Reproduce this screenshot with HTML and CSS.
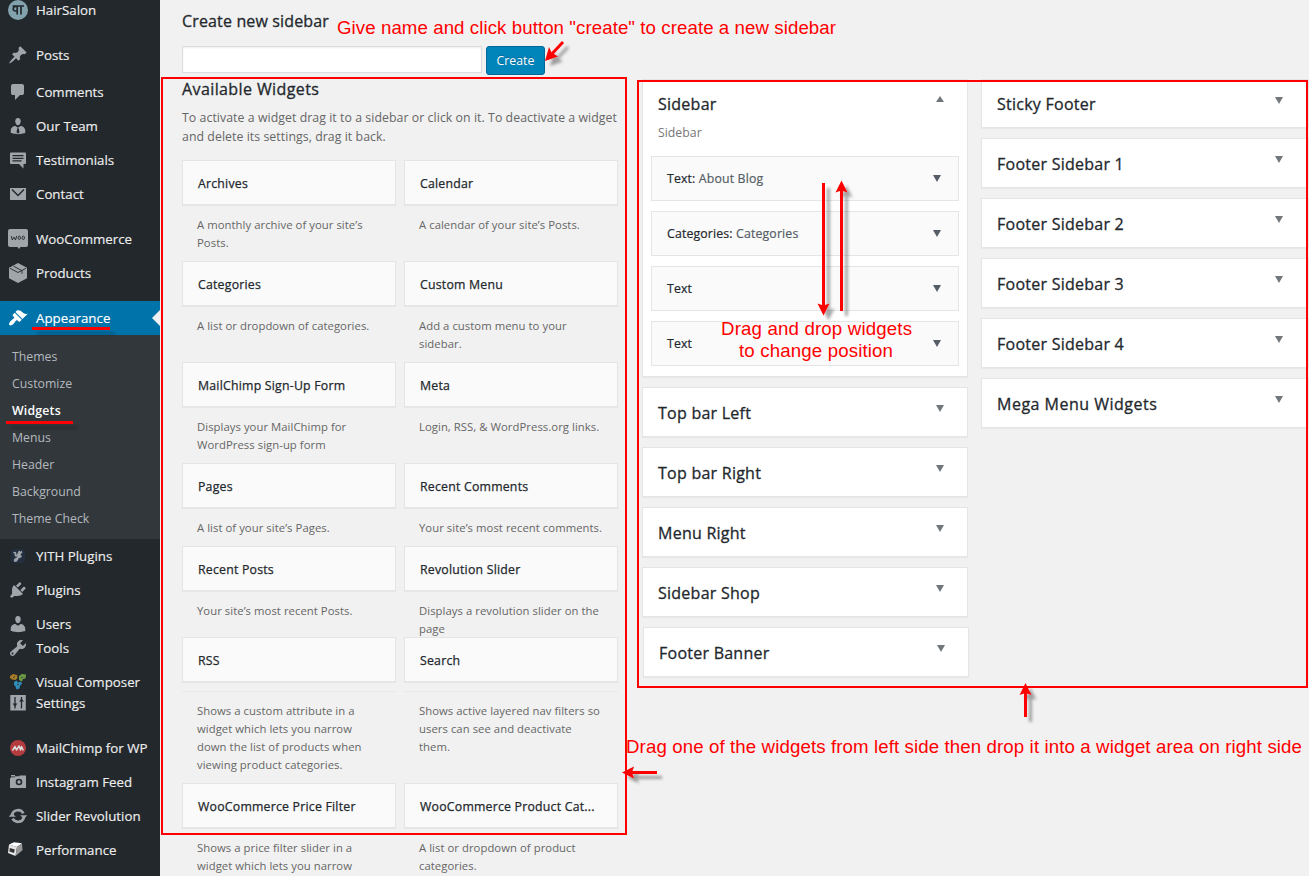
FILE: index.html
```html
<!DOCTYPE html>
<html lang="en">
<head>
<meta charset="utf-8">
<title>Widgets</title>
<link rel="stylesheet" href="styles.css">
</head>
<body>
<div class="admin">
  <nav class="menu">
    <a class="item"><svg class="icon" viewBox="0 0 20 20"><circle cx="10" cy="10" r="10" fill="#82a3ad"/><path d="M4.500 6H16M9.200 6v8.500M13 6v8.500M9 6.500c-4.500-.5-5 4.500-1.500 4.500H9" fill="none" stroke="#23282d" stroke-width="1.700"/></svg>HairSalon</a>
    <a class="item gap"><svg class="icon" viewBox="0 0 20 20"><path d="M10.440 3.020l1.820-1.820 6.360 6.350-1.830 1.820c-1.050-.68-2.480-.57-3.410.36l-.75.750c-.92.930-1.040 2.350-.35 3.410l-1.830 1.820-2.410-2.410-2.800 2.790c-.42.420-3.380 2.710-3.800 2.290s1.860-3.390 2.280-3.810l2.790-2.790L4.100 9.360l1.830-1.820c1.050.69 2.480.57 3.400-.36l.75-.75c.93-.92 1.050-2.350.36-3.410z"/></svg>Posts</a>
    <a class="item nudge"><svg class="icon" viewBox="0 0 20 20"><path d="M5 2h9q.82 0 1.410.590T16 4v7q0 .820-.590 1.410T14 13h-2l-5 5v-5H5q-.82 0-1.410-.590T3 11V4q0-.820.590-1.410T5 2z"/></svg>Comments</a>
    <a class="item"><svg class="icon" viewBox="0 0 20 20"><path d="M10 9.250c-2.270 0-2.730-3.440-2.730-3.440C7 4.020 7.820 2 9.970 2c2.160 0 2.980 2.020 2.710 3.810 0 0-.41 3.440-2.680 3.440zm0 2.570L12.720 10c2.390 0 4.520 2.330 4.520 4.530v2.490s-3.650 1.130-7.240 1.130c-3.650 0-7.240-1.130-7.240-1.130v-2.490c0-2.250 1.940-4.480 4.470-4.480z"/><path d="M9.300 12.200h1.400l.8 4-1.500 1.600-1.500-1.600z" fill="#23282d"/></svg>Our Team</a>
    <a class="item"><svg class="icon" viewBox="0 0 20 20"><path d="M3 2.500h14a1 1 0 0 1 1 1V13a1 1 0 0 1-1 1h-1.500v4.500L11 14H3a1 1 0 0 1-1-1V3.500a1 1 0 0 1 1-1z"/><path d="M4.500 5.700h11M4.500 8.300h11M4.500 10.900h9" stroke="#23282d" stroke-width="1.200"/></svg>Testimonials</a>
    <a class="item"><svg class="icon" viewBox="0 0 20 20"><path d="M2 4h16v12H2z"/><path d="M4 5.500l6 6 6-6" fill="none" stroke="#23282d" stroke-width="1.500"/></svg>Contact</a>
    <a class="item gap"><svg class="icon" viewBox="0 0 20 20"><path d="M2 0h16a2 2 0 0 1 2 2v14a2 2 0 0 1-2 2h-5.500L11 20l-1.500-2H2a2 2 0 0 1-2-2V2a2 2 0 0 1 2-2z"/><path d="M3.300 7l1 4 1.700-3 1.500 3 1.200-4" fill="none" stroke="#23282d" stroke-width=".9"/><ellipse cx="11.300" cy="8.800" rx="1.200" ry="1.700" fill="none" stroke="#23282d" stroke-width=".9"/><ellipse cx="15.300" cy="8.800" rx="1.200" ry="1.700" fill="none" stroke="#23282d" stroke-width=".9"/></svg>WooCommerce</a>
    <a class="item"><svg class="icon" viewBox="0 0 20 20"><path d="M10 0l9 4.700v10.600L10 20l-9-4.700V4.700z"/><path d="M2 5.300l8 4.200 8-4.200M5.500 3.200l8.500 4.500v3" fill="none" stroke="#23282d" stroke-width=".9"/></svg>Products</a>
    <a class="item gap current"><svg class="icon" viewBox="0 0 20 20"><path d="M14.480 11.060L7.410 3.990l1.500-1.500c.5-.56 2.300-.47 3.510.320 1.210.8 1.430 1.280 2.910 2.100 1.180.640 2.450 1.260 4.450.850zm-.71.710L6.700 4.700 4.930 6.470c-.39.390-.39 1.020 0 1.410l1.060 1.060c.39.390.39 1.030 0 1.420-.6.600-1.430 1.110-2.210 1.690-.35.260-.7.530-1.010.840C1.430 14.230.400 16.080 1.400 17.070c.99 1 2.840-.03 4.180-1.360.31-.31.580-.66.850-1.020.57-.78 1.080-1.610 1.690-2.210.39-.39 1.020-.39 1.410 0l1.060 1.060c.39.390 1.020.390 1.410 0z"/></svg>Appearance</a>
    <div class="submenu">
      <a>Themes</a><a>Customize</a><a class="active">Widgets</a><a>Menus</a><a>Header</a><a>Background</a><a>Theme Check</a>
    </div>
    <a class="item"><svg class="icon" viewBox="0 0 20 20"><rect x="3" y="3" width="14" height="14" rx="3" fill="#232f3f"/><path d="M5.500 7c1.500-1 2.500-.5 2 1.500s1.500 2 2.500 0l1.500-3.500c-.5 4-1.500 9-3.500 10-1.500.5-2-1-.5-2 2-1 4-1.500 6-3M14 5.500c-1.500 1-2.500 2.500-2.500 4.500" fill="none" stroke="#a0a5aa" stroke-width="1.700"/></svg>YITH Plugins</a>
    <a class="item"><svg class="icon" viewBox="0 0 20 20"><path d="M13.110 4.360L9.870 7.600 8 5.730l3.240-3.240c.35-.34 1.050-.2 1.560.320.520.510.660 1.210.31 1.550zm-8 1.770l.91-1.120 9.010 9.010-1.190.840c-.71.710-2.630 1.160-3.820 1.160H6.140L4.900 17.260c-.59.590-1.540.590-2.120 0-.59-.58-.59-1.530 0-2.120l1.240-1.240v-3.880c0-1.130.4-3.190 1.090-3.890zm7.260 3.970l3.240-3.240c.34-.35 1.040-.21 1.550.310.520.510.660 1.210.31 1.550l-3.240 3.250z"/></svg>Plugins</a>
    <a class="item"><svg class="icon" viewBox="0 0 20 20"><path d="M10 9.250c-2.270 0-2.730-3.440-2.730-3.440C7 4.020 7.820 2 9.970 2c2.160 0 2.980 2.020 2.710 3.810 0 0-.41 3.440-2.680 3.440zm0 2.570L12.720 10c2.390 0 4.520 2.330 4.520 4.530v2.490s-3.650 1.130-7.240 1.130c-3.650 0-7.240-1.130-7.240-1.130v-2.490c0-2.250 1.940-4.480 4.470-4.480z"/></svg>Users</a>
    <a class="item tools"><svg class="icon" viewBox="0 0 20 20"><path d="M16.680 9.770c-1.340 1.340-3.300 1.670-4.950.99l-5.410 6.520c-.99.990-2.590.990-3.580 0s-.99-2.590 0-3.570l6.520-5.420c-.68-1.650-.35-3.610.99-4.950 1.280-1.280 3.120-1.620 4.720-1.060l-2.890 2.890 2.820 2.820 2.860-2.870c.53 1.580.18 3.390-1.080 4.650zM3.810 16.210c.4.390 1.040.390 1.430 0 .4-.4.400-1.040 0-1.430-.39-.4-1.030-.4-1.430 0-.39.390-.39 1.030 0 1.430z"/></svg>Tools</a>
    <a class="item"><svg class="icon" viewBox="0 0 20 20"><path d="M2 4l3-2 4 1 .500 3-2 2-3.500-.5-2-1.500z" fill="#a97b24"/><path d="M11 4l3-2 4 .5-.5 4-2.500.5-1 2.500-3-1.500z" fill="#6f9a45"/><path d="M6 10l2.500-1.500L10 10.500l3-1 1 2.500-2 1.500-.5 3-3 1-1-3-1.500-1.500z" fill="#2d8cb8"/><path d="M13 6l2-1M5 6l2-2M9 12.500l2 0" stroke="#39483a"/></svg>Visual Composer</a>
    <a class="item settings"><svg class="icon" viewBox="0 0 20 20"><path d="M2.300 2h15.500v15.500H2.300z"/><path d="M7 4v11.500M13.500 4v11.500" stroke="#23282d" stroke-width="1.300"/><path d="M4.500 10.500h5L7 13.500zM11 8.500h5l-2.500-3z" fill="#23282d"/></svg>Settings</a>
    <a class="item gap"><svg class="icon" viewBox="0 0 20 20"><circle cx="10" cy="10" r="8" fill="#b33c3f"/><path d="M4.500 12.500L7 8.500l1.500 3.500 2.500-4 1.500 4 1-3.500 1.800 4" fill="none" stroke="#ddd" stroke-width="1.500" stroke-linejoin="round"/></svg>MailChimp for WP</a>
    <a class="item"><svg class="icon" viewBox="0 0 20 20"><path d="M3 3h4v1.200h4.500V3.500H18V16H2V6h1z"/><path d="M2 4.800h5" stroke="#23282d" stroke-width=".8"/><circle cx="11" cy="10" r="3.300" fill="#23282d"/><circle cx="11" cy="10" r="1.700"/></svg>Instagram Feed</a>
    <a class="item"><svg class="icon" viewBox="0 0 20 20"><path d="M4.100 8.500a6.200 6.200 0 0 1 11.300-1.200M15.900 11.500a6.200 6.200 0 0 1-11.300 1.200" fill="none" stroke="#a0a5aa" stroke-width="2.600"/><path d="M.8 10.800L4 6.700l3.800 4.100zM12.200 9.200h7L16 13.300z"/></svg>Slider Revolution</a>
    <a class="item"><svg class="icon cube" viewBox="0 0 20 20"><path d="M4 4.500l5-2.300 8 1-5 3.800z" fill="#fff"/><path d="M4 4.500l8 2.500-1.500 9-7.500-3z" fill="#e6e6e6"/><path d="M12 7l5-3.800.5 7-7 5.800z" fill="#999"/><path d="M4.800 8l5 1.500-.8 3.500-4.500-1.500z" fill="#333"/></svg>Performance</a>
  </nav>

  <main class="content">
    <section class="available">
      <h2 class="title create-title">Create new sidebar</h2>
      <form class="create"><input class="name" type="text"><button class="button" type="button">Create</button></form>
      <h2 class="title avail-title">Available Widgets</h2>
      <p class="intro">To activate a widget drag it to a sidebar or click on it. To deactivate a widget<br>and delete its settings, drag it back.</p>
      <div class="widgets">
        <div><h3 class="card">Archives</h3><p class="desc">A monthly archive of your site’s<br>Posts.</p></div>
        <div><h3 class="card">Calendar</h3><p class="desc">A calendar of your site’s Posts.</p></div>
        <div><h3 class="card">Categories</h3><p class="desc">A list or dropdown of categories.</p></div>
        <div><h3 class="card">Custom Menu</h3><p class="desc">Add a custom menu to your<br>sidebar.</p></div>
        <div><h3 class="card">MailChimp Sign-Up Form</h3><p class="desc">Displays your MailChimp for<br>WordPress sign-up form</p></div>
        <div><h3 class="card">Meta</h3><p class="desc">Login, RSS, &amp; WordPress.org links.</p></div>
        <div><h3 class="card">Pages</h3><p class="desc">A list of your site’s Pages.</p></div>
        <div><h3 class="card">Recent Comments</h3><p class="desc">Your site’s most recent comments.</p></div>
        <div><h3 class="card">Recent Posts</h3><p class="desc">Your site’s most recent Posts.</p></div>
        <div><h3 class="card">Revolution Slider</h3><p class="desc">Displays a revolution slider on the<br>page</p></div>
        <div class="cover"><h3 class="card">RSS</h3></div>
        <div class="cover"><h3 class="card">Search</h3></div>
        <div class="tail"><p class="desc">Shows a custom attribute in a<br>widget which lets you narrow<br>down the list of products when<br>viewing product categories.</p></div>
        <div class="tail"><p class="desc">Shows active layered nav filters so<br>users can see and deactivate<br>them.</p></div>
        <div><h3 class="card">WooCommerce Price Filter</h3><p class="desc">Shows a price filter slider in a<br>widget which lets you narrow</p></div>
        <div><h3 class="card">WooCommerce Product Cat...</h3><p class="desc">A list or dropdown of product<br>categories.</p></div>
      </div>
    </section>

    <section class="areas">
      <div class="area open">
        <h3 class="area-title">Sidebar<i class="up"></i></h3>
        <p class="area-desc">Sidebar</p>
        <div class="placed"><span>Text: <em>About Blog</em></span><i class="down"></i></div>
        <div class="placed"><span>Categories: <em>Categories</em></span><i class="down"></i></div>
        <div class="placed"><span>Text</span><i class="down"></i></div>
        <div class="placed"><span>Text</span><i class="down"></i></div>
      </div>
      <div class="area"><h3 class="area-title">Top bar Left<i class="down"></i></h3></div>
      <div class="area"><h3 class="area-title">Top bar Right<i class="down"></i></h3></div>
      <div class="area"><h3 class="area-title">Menu Right<i class="down"></i></h3></div>
      <div class="area"><h3 class="area-title">Sidebar Shop<i class="down"></i></h3></div>
      <div class="area shifted"><h3 class="area-title">Footer Banner<i class="down"></i></h3></div>
    </section>

    <section class="areas second">
      <div class="area first"><h3 class="area-title">Sticky Footer<i class="down"></i></h3></div>
      <div class="area"><h3 class="area-title">Footer Sidebar 1<i class="down"></i></h3></div>
      <div class="area"><h3 class="area-title">Footer Sidebar 2<i class="down"></i></h3></div>
      <div class="area"><h3 class="area-title">Footer Sidebar 3<i class="down"></i></h3></div>
      <div class="area"><h3 class="area-title">Footer Sidebar 4<i class="down"></i></h3></div>
      <div class="area"><h3 class="area-title wide">Mega Menu Widgets<i class="down"></i></h3></div>
    </section>
  </main>

  <svg class="notes" viewBox="0 0 1309 876">
    <defs>
      <filter id="shade" x="0" y="0" width="1309" height="876" filterUnits="userSpaceOnUse"><feDropShadow dx="5" dy="5" stdDeviation="1.800" flood-color="#000" flood-opacity=".35"/></filter>
      <filter id="faint" x="0" y="0" width="1309" height="876" filterUnits="userSpaceOnUse"><feDropShadow dx="5" dy="5" stdDeviation="1.800" flood-color="#000" flood-opacity=".2"/></filter>
    </defs>
    <g fill="none" stroke="#f00" stroke-width="2">
      <rect x="162" y="78" width="464" height="756"/>
      <rect x="638" y="81" width="669" height="606"/>
    </g>
    <g fill="none" stroke="#f00" stroke-width="3" filter="url(#faint)">
      <path d="M32 328.500H110"/>
      <path d="M6 422.500H73"/>
    </g>
    <g filter="url(#shade)">
      <g fill="none" stroke="#f00" stroke-width="3">
        <path d="M563 42L549 57"/>
        <path d="M823.500 183V309"/>
        <path d="M841.500 311V188"/>
        <path d="M1025.500 717V690"/>
        <path d="M657 772.500H629"/>
      </g>
      <g fill="#f00">
        <path d="M545 61l4-14 2.500 5.500 6.500 4z"/>
        <path d="M823.500 315.500l-6-12 6 2 6-2z"/>
        <path d="M841.500 180.500l-6 12 6-2 6 2z"/>
        <path d="M1025.500 683l-6 12 6-2 6 2z"/>
        <path d="M622 772.500l12-6-2 6 2 6z"/>
      </g>
    </g>
    <g class="note">
      <text x="337" y="34" textLength="499">Give name and click button "create" to create a new sidebar</text>
      <text x="721" y="335" textLength="191">Drag and drop widgets</text>
      <text x="739" y="357" textLength="154">to change position</text>
      <text x="626" y="753" textLength="676">Drag one of the widgets from left side then drop it into a widget area on right side</text>
    </g>
  </svg>
</div>
</body>
</html>
```
FILE: styles.css
```css
* { box-sizing: border-box; }
body, h2, h3, p { margin: 0; font-weight: 400; }
body {
  background: #f1f1f1;
  font-family: "Open Sans", "Noto Sans", sans-serif;
  font-size: 12.3px;
  color: #23282d;
  overflow: hidden;
}
.admin { position: relative; display: flex; width: 1309px; height: 876px; overflow: hidden; }

.menu { width: 160px; flex: none; background: #23282d; margin-top: -7px; height: 883px; }
.item {
  display: flex; align-items: center; gap: 8px; height: 34px; padding-left: 8px;
  font-size: 13.3px; color: #eee; white-space: nowrap; position: relative;
  -webkit-text-stroke: .15px currentColor;
}
.icon { width: 20px; height: 20px; fill: #a0a5aa; flex: none; -webkit-text-stroke: 0; }
.cube { margin: 0 3px 0 -3px; }
.gap { margin-top: 11px; }
.nudge { margin-top: 3px; }
.tools { margin-top: -10px; }
.settings { margin-top: -13px; }
.current { background: #0073aa; color: #fff; }
.current .icon { fill: #fff; }
.current::after {
  content: ""; position: absolute; right: 0; top: 9px;
  border: 8px solid transparent; border-left-width: 0; border-right-color: #f1f1f1;
}
.submenu { background: #32373c; height: 204px; padding: 7.500px 12px; }
.submenu a { display: block; height: 27px; line-height: 27px; font-size: 12.300px; color: #b4b9be; }
.submenu .active { color: #fff; font-weight: 600; letter-spacing: .2px; }

.content { display: flex; flex: none; width: 1149px; padding-left: 22px; }
.available { width: 436px; flex: none; }
.title { font-size: 16px; line-height: 24px; letter-spacing: .15px; -webkit-text-stroke: .3px currentColor; }
.create-title { margin-top: 9px; }
.create { display: flex; gap: 4px; margin-top: 13px; height: 29px; }
.name { width: 300px; height: 27px; border: 1px solid #ddd; background: #fff; box-shadow: inset 0 1px 2px rgba(0,0,0,.07); padding: 0; }
.button {
  width: 59px; height: 29px; padding: 0; border: 1px solid #006799; border-radius: 3px;
  background: #0085ba; color: #fff; font: 12.300px "Open Sans", sans-serif;
  text-shadow: 0 -1px 1px #006799;
}
.avail-title { margin-top: 2px; letter-spacing: .4px; }
.intro { margin-top: 7px; line-height: 19px; letter-spacing: .06px; color: #666; white-space: nowrap; }
.widgets {
  display: grid; grid-template-columns: 214px 214px; column-gap: 8px; margin-top: 14px;
  grid-template-rows: 101px 101px 101px 83px 91px 54px 92px 100px;
}
.card {
  height: 45px; padding: 0 15px; line-height: 45px; font-size: 12.300px; letter-spacing: .22px;
  -webkit-text-stroke: .25px currentColor;
  border: 1px solid #e5e5e5; background: #fafafa; box-shadow: 0 1px 1px rgba(0,0,0,.04); white-space: nowrap;
}
.desc { margin: 11px 0 0 15px; font-size: 11.300px; line-height: 18px; letter-spacing: .05px; color: #666; white-space: nowrap; }
.cover { position: relative; }
.tail { border-top: 1px solid #e9e9e9; }
.tail .desc { margin-top: 10px; }

.areas { width: 326px; flex: none; margin: 79px 0 0 24px; }
.second { margin-left: 13px; width: 328px; }
.area { height: 50px; margin-bottom: 10px; background: #fff; border: 1px solid #e5e5e5; box-shadow: 0 1px 1px rgba(0,0,0,.04); }
.area.first { height: 49px; }
.first .area-title { line-height: 49px; }
.open { height: 298px; }
.shifted { margin-left: 1px; margin-right: -1px; }
.area-title {
  display: flex; justify-content: space-between; padding: 0 23px 0 15px;
  font-size: 16px; line-height: 51px; letter-spacing: .25px; -webkit-text-stroke: .3px currentColor;
}
.wide { letter-spacing: .5px; }
.second .area-title { padding-right: 25px; }
.up, .down { width: 8px; height: 7px; margin-top: 17px; background: #72777c; flex: none; }
.down { clip-path: polygon(0 0, 100% 0, 50% 100%); }
.up { clip-path: polygon(0 100%, 100% 100%, 50% 0); margin-top: 16px; height: 6px; }
.open .area-title { line-height: 49px; }
.area-desc { padding-left: 15px; line-height: 19px; margin: -6px 0 14px; color: #777; }
.placed {
  display: flex; align-items: center; justify-content: space-between; height: 45px; margin: 0 8px 10px;
  padding: 0 17px 0 15px; border: 1px solid #e5e5e5; background: #fafafa; letter-spacing: .15px;
  -webkit-text-stroke: .2px currentColor;
}
.placed em { font-style: normal; color: #555d66; }
.placed .down { margin: 0; background: #555d66; }

.notes { position: absolute; left: 0; top: 0; width: 1309px; height: 876px; pointer-events: none; }
.note { font-family: "Liberation Sans", Arial, sans-serif; font-size: 18.670px; fill: #f00; }
```
